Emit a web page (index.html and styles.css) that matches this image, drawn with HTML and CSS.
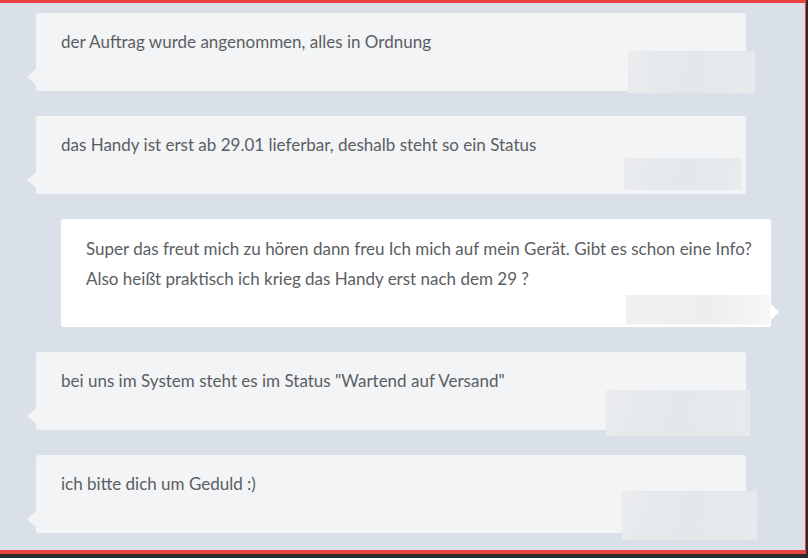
FILE: index.html
```html
<!DOCTYPE html>
<html lang="de">
<head>
    <meta charset="UTF-8">
    <meta name="viewport" content="width=device-width, initial-scale=1.0">
    <title>Chat</title>
    <link rel="stylesheet" href="styles.css">
</head>
<body>
    <div class="frame">
        <div class="chat">
            <div class="msg agent">
                <p>der Auftrag wurde angenommen, alles in Ordnung</p>
                <span class="stamp stamp-1"></span>
            </div>
            <div class="msg agent">
                <p>das Handy ist erst ab 29.01 lieferbar, deshalb steht so ein Status</p>
                <span class="stamp stamp-2"></span>
            </div>
            <div class="msg user">
                <p>Super das freut mich zu hören dann freu Ich mich auf mein Gerät. Gibt es schon eine Info?<br>Also heißt praktisch ich krieg das Handy erst nach dem 29 ?</p>
                <span class="stamp stamp-3"></span>
            </div>
            <div class="msg agent">
                <p>bei uns im System steht es im Status "Wartend auf Versand"</p>
                <span class="stamp stamp-4"></span>
            </div>
            <div class="msg agent">
                <p>ich bitte dich um Geduld :)</p>
                <span class="stamp stamp-5"></span>
            </div>
        </div>
    </div>
</body>
</html>
```

FILE: styles.css
```css
body {
    margin: 0;
    background-color: #2b2b2b;
    font-family: Lato, "Open Sans", sans-serif;
}

.frame {
    width: 806px;
    height: 554px;
    box-sizing: border-box;
    background-color: #d9e0e7;
    border-top: 3px solid #e8413f;
    border-right: 1px solid #e8413f;
    border-bottom: 4px solid #e8413f;
    overflow: hidden;
}

.chat {
    display: flex;
    flex-direction: column;
    gap: 25px;
    padding-top: 10px;
}

.msg {
    position: relative;
    width: 710px;
    box-sizing: border-box;
    padding: 14px 10px 34px 25px;
    border-radius: 3px;
    background-color: #f3f4f6;
}

.msg p {
    margin: 0;
    font-size: 17px;
    line-height: 30px;
    color: #5a5e63;
    white-space: nowrap;
}

.agent {
    margin-left: 36px;
}

.user {
    margin-left: 61px;
    padding-top: 15px;
    padding-bottom: 33px;
    background-color: #fff;
}

.msg::before {
    content: "";
    position: absolute;
    bottom: 6px;
    border-top: 8px solid transparent;
    border-bottom: 8px solid transparent;
}

.agent::before {
    left: -9px;
    border-right: 9px solid #f3f4f6;
}

.user::before {
    right: -8px;
    bottom: 7px;
    border-left: 8px solid #fff;
}

.stamp {
    position: absolute;
    background: linear-gradient(100deg, #e9ebed, #e3e7ea 50%, #e8eaec);
    opacity: 0.95;
}

.stamp-1 { right: -9px; bottom: -2px; width: 127px; height: 42px; }
.stamp-2 { right: 4px; bottom: 4px; width: 118px; height: 32px; }
.stamp-3 { right: 1px; bottom: 3px; width: 144px; height: 29px; background: linear-gradient(90deg, #efefef, #ededee 60%, #f6f6f6); }
.stamp-4 { right: -4px; bottom: -6px; width: 144px; height: 46px; }
.stamp-5 { right: -11px; bottom: -7px; width: 135px; height: 49px; }
```
